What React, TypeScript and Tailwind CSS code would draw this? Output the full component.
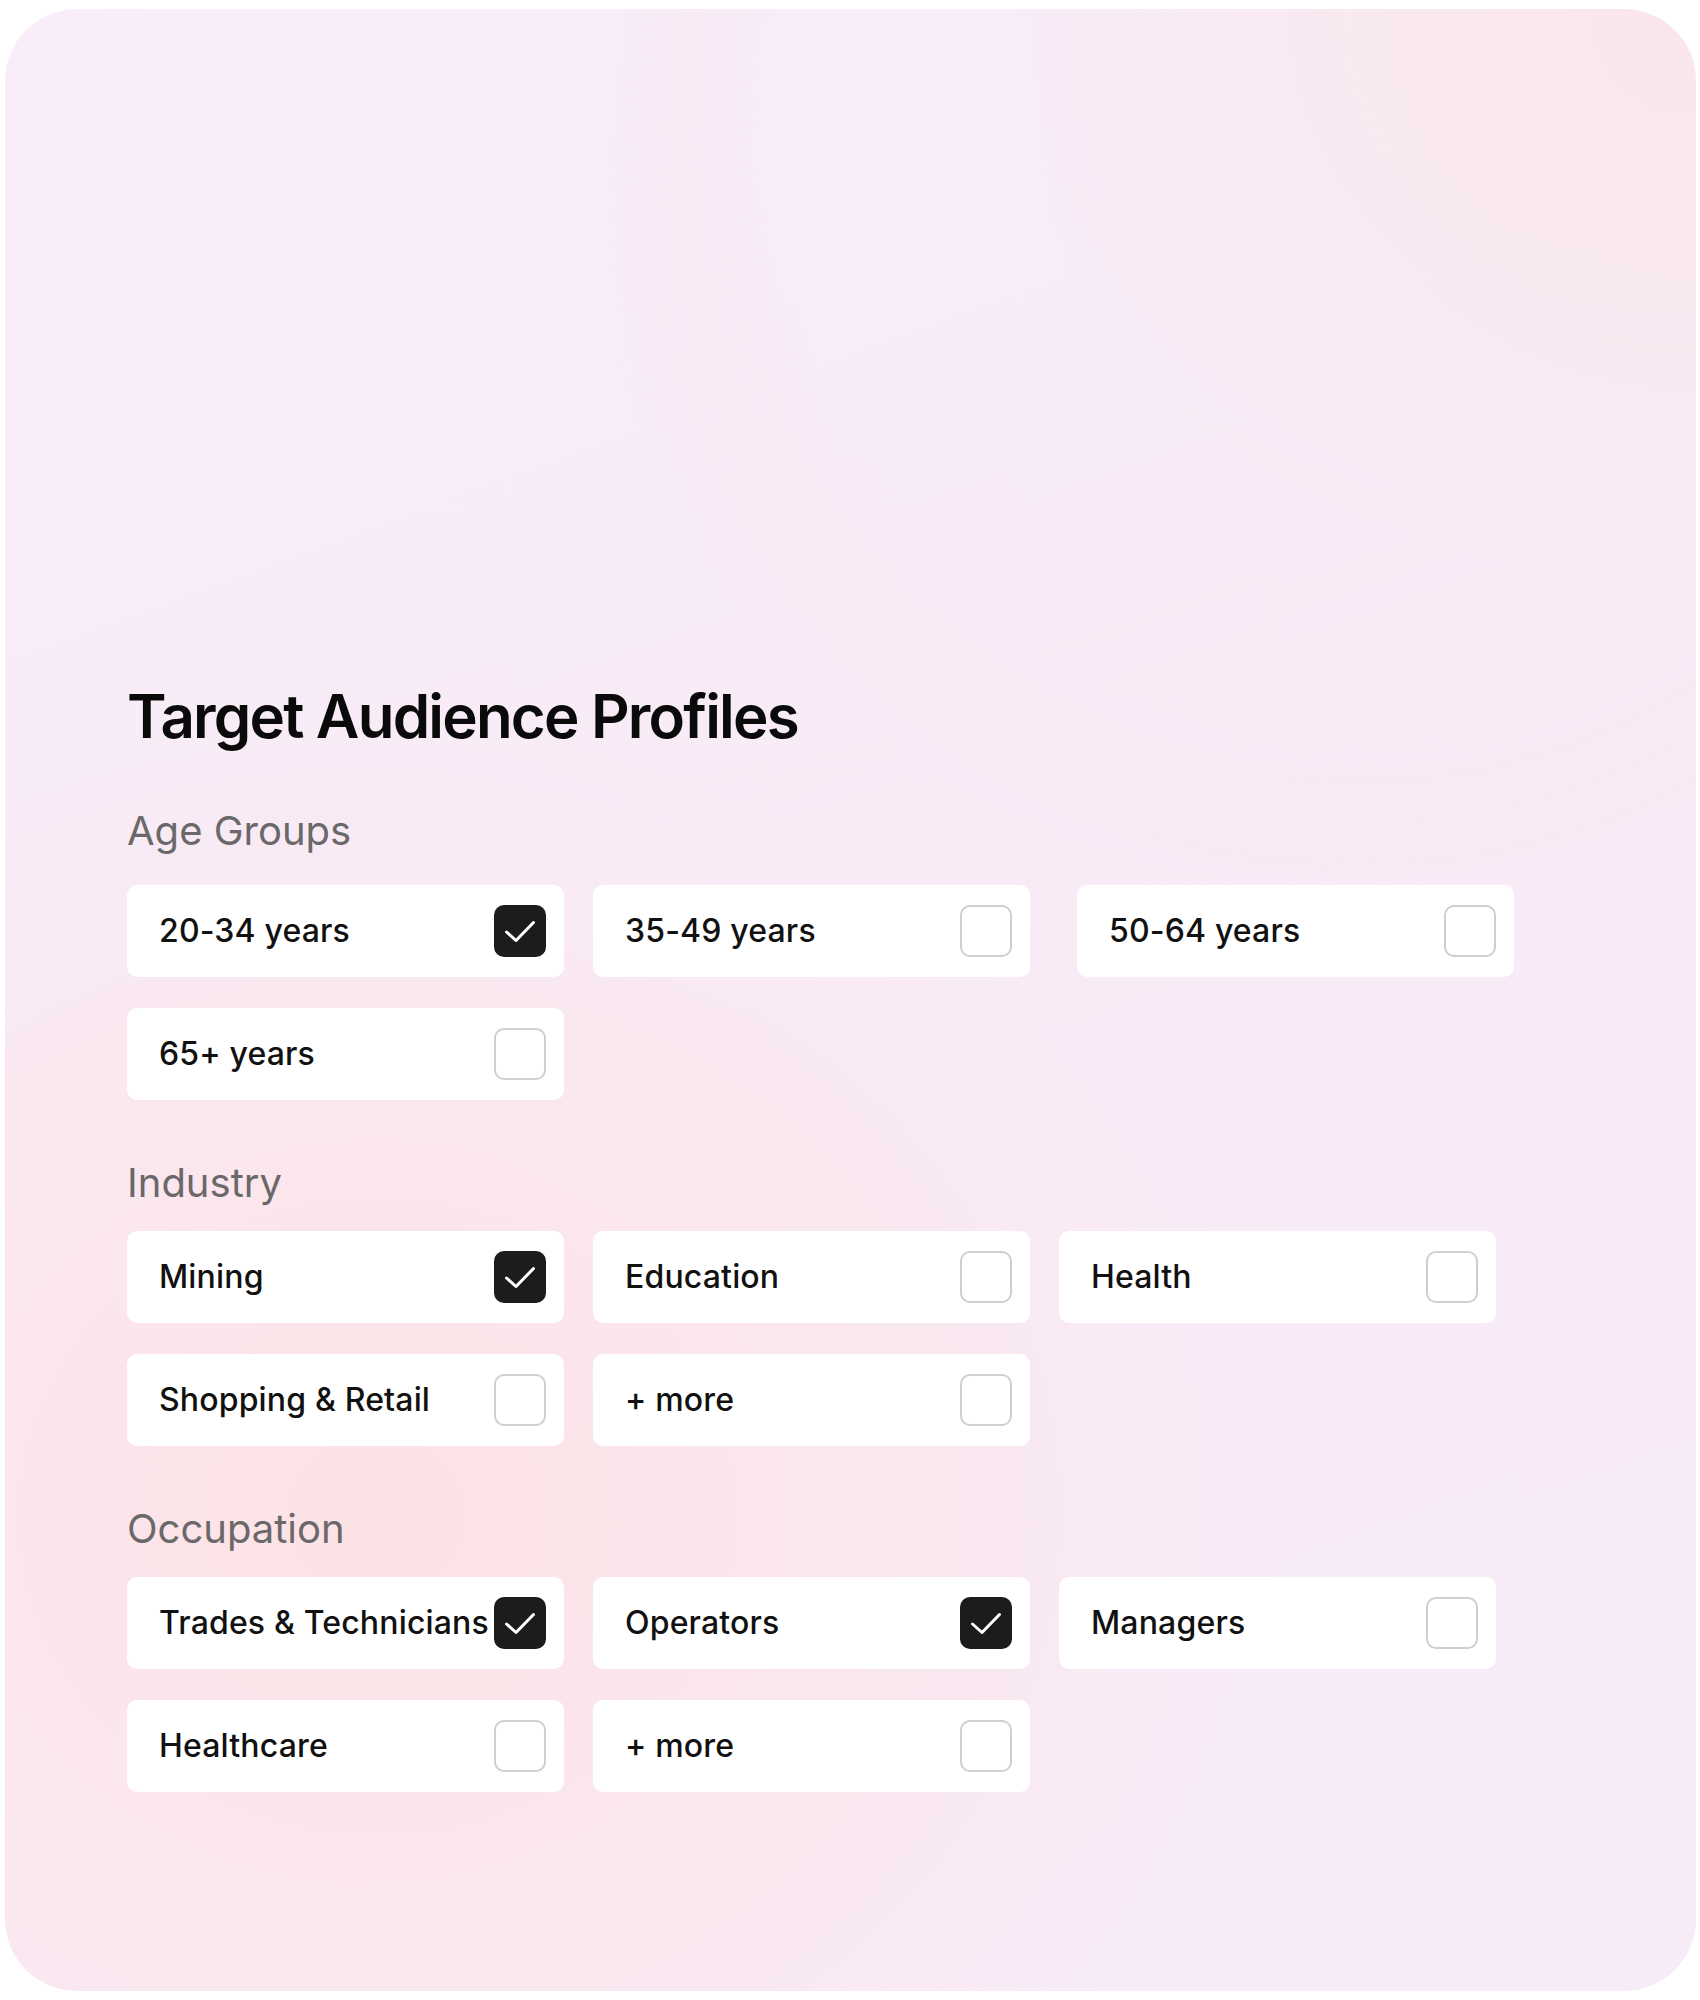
import React from "react"

type Option = {
  label: string
  checked?: boolean
  shift?: boolean
}

interface ISection {
  title: string
  options: Option[]
}

const sections: ISection[] = [
  {
    title: "Age Groups",
    options: [
      { label: "20-34 years", checked: true },
      { label: "35-49 years" },
      { label: "50-64 years", shift: true },
      { label: "65+ years" },
    ],
  },
  {
    title: "Industry",
    options: [
      { label: "Mining", checked: true },
      { label: "Education" },
      { label: "Health" },
      { label: "Shopping & Retail" },
      { label: "+ more" },
    ],
  },
  {
    title: "Occupation",
    options: [
      { label: "Trades & Technicians", checked: true },
      { label: "Operators", checked: true },
      { label: "Managers" },
      { label: "Healthcare" },
      { label: "+ more" },
    ],
  },
]

function Checkbox({ checked }: { checked?: boolean }) {
  if (checked) {
    return (
      <div className="w-[52px] h-[52px] shrink-0 rounded-[10px] bg-[#1c1c1c] flex items-center justify-center">
        <svg className="w-[52px] h-[52px]" viewBox="0 0 52 52" fill="none">
          <path
            d="M12.5 27 L22 35.5 L39.5 17.5"
            stroke="white"
            strokeWidth={3}
            strokeLinecap="round"
            strokeLinejoin="round"
          />
        </svg>
      </div>
    )
  }
  return (
    <div className="w-[52px] h-[52px] shrink-0 rounded-[10px] bg-white border-2 border-[#cfcfcf]" />
  )
}

function OptionCard({ option }: { option: Option }) {
  return (
    <div
      className={`h-[92px] w-[437px] bg-white rounded-[10px] flex items-center justify-between pl-[32px] pr-[18px] ${
        option.shift ? "ml-[18px]" : ""
      }`}
    >
      <span className="text-[32px] leading-none font-medium tracking-[0.005em] text-[#111111] whitespace-nowrap">
        {option.label}
      </span>
      <Checkbox checked={option.checked} />
    </div>
  )
}

export default function App() {
  return (
    <div className="w-[1700px] h-[2000px] bg-white pt-[9px] pl-[5px] font-['Inter',_'Liberation_Sans',_sans-serif]">
      <div className="relative w-[1691px] h-[1982px] rounded-[72px] overflow-hidden bg-[radial-gradient(ellipse_900px_800px_at_22%_76%,#fce2e5_0%,#fbe6ec_40%,transparent_100%),radial-gradient(ellipse_700px_600px_at_100%_0%,#fae6ea_0%,transparent_100%),linear-gradient(160deg,#f8edf9_0%,#f8ebf6_50%,#f7ebf8_100%)]">
        {/* faint rings, top right */}
        <div className="absolute -right-[360px] -top-[560px] w-[1400px] h-[1400px] rounded-full border-[50px] border-[#fbe4ea]/30 blur-[30px]" />
        <div className="relative pl-[122px] pt-[677px] flex flex-col">
          <h1 className="text-[60px] leading-none font-semibold tracking-[-0.03em] text-[#0a0a0a]">
            Target Audience Profiles
          </h1>
          <div className="mt-[65px] flex flex-col gap-[63px]">
            {sections.map((section, i) => (
              <div key={section.title} className="flex flex-col">
                <h2 className="text-[40px] leading-none font-normal text-[#6b6869]">
                  {section.title}
                </h2>
                <div
                  className={`grid grid-cols-[437px_437px_437px] gap-x-[29px] gap-y-[31px] ${
                    i === 0 ? "mt-[34px]" : "mt-[28px]"
                  }`}
                >
                  {section.options.map((option) => (
                    <OptionCard key={option.label} option={option} />
                  ))}
                </div>
              </div>
            ))}
          </div>
        </div>
      </div>
    </div>
  )
}
